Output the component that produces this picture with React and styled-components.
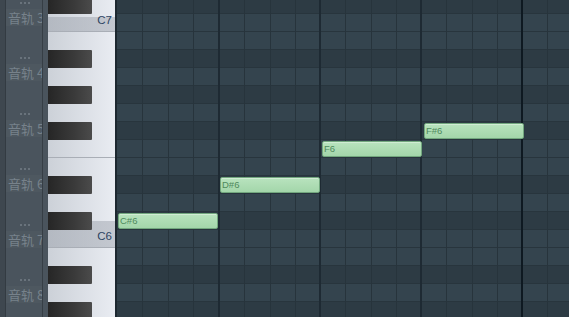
import React from "react";
import styled, { createGlobalStyle } from "styled-components";

const GlobalStyle = createGlobalStyle`
  html, body { margin: 0; padding: 0; background: #2f3e47; }
  body { font-family: "Liberation Sans", Arial, sans-serif; }
`;

const ROW = 18;
const BAR = 102;
const TOP = -4;

// rows from top of the visible roll, C#7 downwards
const NAMES = ["C", "C#", "D", "D#", "E", "F", "F#", "G", "G#", "A", "A#", "B"];
const START = 7 * 12 + 1; // C#7
const rows = Array.from({ length: 20 }, (_, i) => {
  const n = START - i;
  const pc = ((n % 12) + 12) % 12;
  return { name: NAMES[pc] + Math.floor(n / 12), black: NAMES[pc].includes("#") };
});

const whiteKeys = [
  { name: "D7", h: 9 },
  { name: "C7", h: 27, label: "C7", band: 15 },
  { name: "B6", h: 27 },
  { name: "A6", h: 36 },
  { name: "G6", h: 36 },
  { name: "F6", h: 27, edge: true },
  { name: "E6", h: 27 },
  { name: "D6", h: 36 },
  { name: "C6", h: 27, label: "C6", band: 27 },
  { name: "B5", h: 27 },
  { name: "A5", h: 36 },
  { name: "G5", h: 36 },
];

const tracks = [3, 4, 5, 6, 7, 8];

const notes = [
  { name: "C#6", bar: 0 },
  { name: "D#6", bar: 1 },
  { name: "F6", bar: 2 },
  { name: "F#6", bar: 3 },
];

const Screen = styled.div`
  display: flex;
  width: 569px;
  height: 317px;
  overflow: hidden;
`;

const TrackPanel = styled.div`
  display: flex;
  width: 48px;
  flex-shrink: 0;
  background: #3e474f;
`;

const TrackStrip = styled.div`
  width: 5px;
  border-right: 1px solid #333b42;
`;

const TrackList = styled.div`
  width: 36px;
  background: #4a545d;
  border-right: 1px solid #363e45;
  overflow: hidden;
`;

const TrackTail = styled.div`
  flex: 1;
  background: #4a545d;
`;

const TrackSlot = styled.div`
  height: 55.6px;
  display: flex;
  flex-direction: column;
  padding-top: 1.5px;
  box-sizing: border-box;
`;

const Dots = styled.div`
  display: flex;
  gap: 2px;
  padding-left: 14px;
  span {
    width: 2px;
    height: 2px;
    background: #69737c;
  }
`;

const TrackLabel = styled.div`
  margin-top: 5px;
  padding: 1px 0 1px 2px;
  height: 17px;
  box-sizing: border-box;
  white-space: nowrap;
  font-family: "Noto Sans CJK SC", "Noto Sans", sans-serif;
  font-size: 13px;
  line-height: 15px;
  color: #77828b;
  background: rgba(255, 255, 255, 0.025);
`;

const Keyboard = styled.div`
  position: relative;
  width: 67px;
  flex-shrink: 0;
  border-right: 2px solid #1d2830;
  box-shadow: inset -1px 0 0 #8d939b;
  overflow: hidden;
`;

const KeyStack = styled.div`
  display: flex;
  flex-direction: column;
  margin-top: ${TOP}px;
`;

const WhiteKey = styled.div`
  height: ${(p) => p.$h}px;
  box-sizing: border-box;
  display: flex;
  align-items: flex-end;
  justify-content: flex-end;
  padding: 0 3px 5px 0;
  background: ${(p) =>
    p.$band
      ? `linear-gradient(180deg, transparent ${p.$h - p.$band}px, rgba(150, 156, 166, 0.45) ${p.$h - p.$band}px),
         linear-gradient(90deg, #ccd1d8, #e9ecf2)`
      : "linear-gradient(90deg, #ccd1d8, #e9ecf2)"};
  border-bottom: ${(p) => (p.$edge ? "1px solid #a9aeb6" : "none")};
  font-size: 11.5px;
  line-height: 12px;
  color: #2c4462;
`;

const BlackKey = styled.div`
  position: absolute;
  left: 0;
  width: 44px;
  height: ${ROW}px;
  background: linear-gradient(90deg, #262626, #3a3a3a 60%, #4b4b4b);
  border-radius: 0 1px 1px 0;
`;

const Roll = styled.div`
  position: relative;
  flex: 1;
  overflow: hidden;
`;

const Lanes = styled.div`
  display: flex;
  flex-direction: column;
  margin-top: ${TOP}px;
`;

const Lane = styled.div`
  height: ${ROW}px;
  box-sizing: border-box;
  border-bottom: 1px solid #28353d;
  background: ${(p) => (p.$black ? "#2d3b44" : "#34444e")};
`;

const BarGrid = styled.div`
  position: absolute;
  inset: 0;
  display: flex;
  pointer-events: none;
`;

const Bar = styled.div`
  width: ${BAR}px;
  flex-shrink: 0;
  display: flex;
  box-sizing: border-box;
  border-left: ${(p) => (p.$strong ? "2px solid #0e1921" : p.$first ? "none" : "2px solid #1e2a33")};
  margin-left: ${(p) => (p.$first ? 0 : -1)}px;
`;

const Beat = styled.div`
  flex: 1;
  border-right: 1px solid #27343c;
  &:last-child { border-right: none; }
`;

const Note = styled.div`
  position: absolute;
  width: 100px;
  height: 16px;
  box-sizing: border-box;
  border: 1px solid #72a77e;
  border-radius: 2px;
  background: linear-gradient(180deg, #b8e3be, #a3d6aa);
  box-shadow: inset 0 1px 0 rgba(255, 255, 255, 0.35);
  font-size: 9.5px;
  line-height: 14px;
  padding-left: 1px;
  color: #4f8a5d;
`;

export default function App() {
  const blackTops = [];
  rows.forEach((r, i) => {
    if (r.black) blackTops.push(TOP + i * ROW);
  });
  const rowIndex = (name) => rows.findIndex((r) => r.name === name);

  return (
    <>
      <GlobalStyle />
      <Screen>
        <TrackPanel>
          <TrackStrip />
          <TrackList>
            {tracks.map((t) => (
              <TrackSlot key={t}>
                <Dots>
                  <span />
                  <span />
                  <span />
                </Dots>
                <TrackLabel>音轨 {t}</TrackLabel>
              </TrackSlot>
            ))}
          </TrackList>
          <TrackTail />
        </TrackPanel>

        <Keyboard>
          <KeyStack>
            {whiteKeys.map((k) => (
              <WhiteKey
                key={k.name}
                $h={k.h}
                $band={k.band}
                $edge={k.label || k.edge}
              >
                {k.label}
              </WhiteKey>
            ))}
          </KeyStack>
          {blackTops.map((top) => (
            <BlackKey key={top} style={{ top }} />
          ))}
        </Keyboard>

        <Roll>
          <Lanes>
            {rows.map((r) => (
              <Lane key={r.name} $black={r.black} />
            ))}
          </Lanes>
          <BarGrid>
            {[0, 1, 2, 3, 4].map((b) => (
              <Bar key={b} $first={b === 0} $strong={b === 4}>
                <Beat />
                <Beat />
                <Beat />
                <Beat />
              </Bar>
            ))}
          </BarGrid>
          {notes.map((n) => (
            <Note
              key={n.name}
              style={{ left: n.bar * BAR + 1, top: TOP + rowIndex(n.name) * ROW + 1 }}
            >
              {n.name}
            </Note>
          ))}
        </Roll>
      </Screen>
    </>
  );
}
